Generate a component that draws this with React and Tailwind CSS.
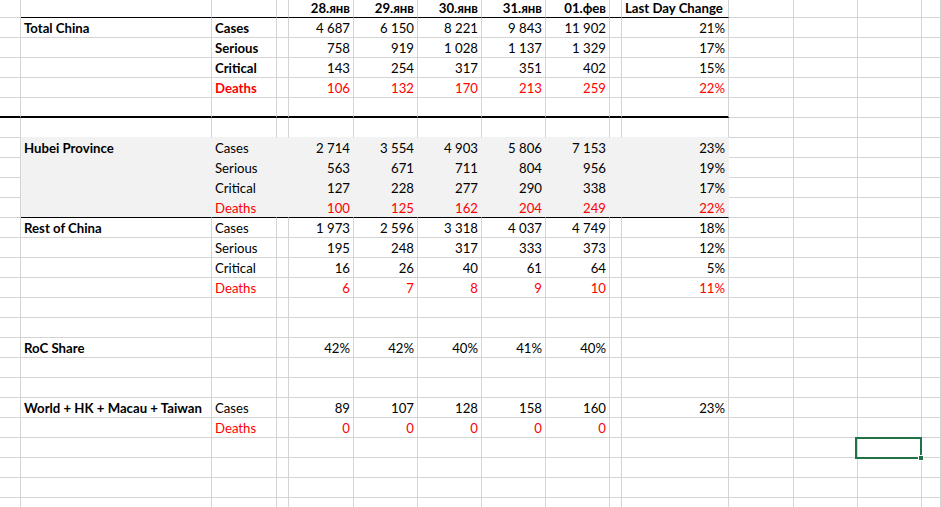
import React from 'react';

const GRID = 'grid grid-cols-[21px_191px_65px_12px_65px_64px_64px_64px_64px_12px_107px_65px_64px_64px_1fr]';

const DATES = ['28.янв', '29.янв', '30.янв', '31.янв', '01.фев'];

// one entry per sheet row below the header
const rows = [
  { name: 'Total China', label: 'Cases', vals: ['4 687', '6 150', '8 221', '9 843', '11 902'], change: '21%', boldLabel: true },
  { label: 'Serious', vals: ['758', '919', '1 028', '1 137', '1 329'], change: '17%', boldLabel: true },
  { label: 'Critical', vals: ['143', '254', '317', '351', '402'], change: '15%', boldLabel: true },
  { label: 'Deaths', vals: ['106', '132', '170', '213', '259'], change: '22%', boldLabel: true, red: true },
  { thick: true },
  { fillBelow: true },
  { name: 'Hubei Province', label: 'Cases', vals: ['2 714', '3 554', '4 903', '5 806', '7 153'], change: '23%', fill: true },
  { label: 'Serious', vals: ['563', '671', '711', '804', '956'], change: '19%', fill: true },
  { label: 'Critical', vals: ['127', '228', '277', '290', '338'], change: '17%', fill: true },
  { label: 'Deaths', vals: ['100', '125', '162', '204', '249'], change: '22%', fill: true, red: true, line: true },
  { name: 'Rest of China', label: 'Cases', vals: ['1 973', '2 596', '3 318', '4 037', '4 749'], change: '18%' },
  { label: 'Serious', vals: ['195', '248', '317', '333', '373'], change: '12%' },
  { label: 'Critical', vals: ['16', '26', '40', '61', '64'], change: '5%' },
  { label: 'Deaths', vals: ['6', '7', '8', '9', '10'], change: '11%', red: true },
  {},
  {},
  { name: 'RoC Share', vals: ['42%', '42%', '40%', '41%', '40%'] },
  {},
  {},
  { name: 'World + HK + Macau + Taiwan', label: 'Cases', vals: ['89', '107', '128', '158', '160'], change: '23%' },
  { label: 'Deaths', vals: ['0', '0', '0', '0', '0'], red: true },
  { selected: true },
  {},
  {},
  {},
];

function cellText(row, c) {
  if (c === 1) return row.name;
  if (c === 2) return row.label;
  if (c >= 4 && c <= 8) return row.vals?.[c - 4];
  if (c === 10) return row.change;
  return null;
}

function SheetRow({ row }) {
  return Array.from({ length: 15 }, (_, c) => {
    const inTable = c >= 1 && c <= 10;
    const filled = row.fill && inTable;
    let right = 'border-r-[#d4d4d4]';
    let bottom = 'border-b border-b-[#d4d4d4]';
    if (filled) right = 'border-r-[#f2f2f2]';
    if (filled) bottom = 'border-b border-b-[#f2f2f2]';
    if (row.fillBelow && inTable) bottom = 'border-b border-b-[#f2f2f2]';
    if (row.line && inTable) bottom = 'border-b border-b-black';
    if (row.thick && c <= 10) bottom = 'border-b-2 border-b-black';

    const text = cellText(row, c);
    const align = c >= 4 ? 'justify-end' : 'justify-start';
    const weight = c === 1 || (c === 2 && row.boldLabel) ? 'font-bold' : 'font-normal';
    const color = row.red && c !== 1 ? 'text-[#ff0000]' : 'text-black';

    return (
      <div
        key={c}
        className={`relative h-5 flex items-center pt-[2px] px-[3px] whitespace-nowrap border-r ${right} ${bottom} ${align} ${weight} ${color} ${filled ? 'bg-[#f2f2f2]' : 'bg-white'}`}
      >
        {text}
        {row.selected && c === 13 && (
          <div className="absolute -left-[3px] -top-[1px] w-[67px] h-[22px] border-2 border-[#217346] z-10">
            <div className="absolute -right-[4px] -bottom-[4px] w-[6px] h-[6px] bg-[#217346] border border-white" />
          </div>
        )}
      </div>
    );
  });
}

export default function App() {
  return (
    <div className="w-[941px] h-[507px] overflow-hidden bg-white font-['Lato',sans-serif] text-[13.2px] leading-none">
      <div className={GRID}>
        {Array.from({ length: 15 }, (_, c) => {
          const inTable = c >= 1 && c <= 10;
          let text = null;
          if (c >= 4 && c <= 8) text = DATES[c - 4];
          if (c === 10) text = 'Last Day Change';
          return (
            <div
              key={c}
              className={`h-[18px] flex items-center pt-[1px] px-[3px] whitespace-nowrap font-bold border-r border-r-[#d4d4d4] border-b ${inTable ? 'border-b-black' : 'border-b-[#d4d4d4]'} ${c >= 4 && c <= 8 ? 'justify-end' : 'justify-start'}`}
            >
              {text}
            </div>
          );
        })}
        {rows.map((row, i) => (
          <SheetRow key={i} row={row} />
        ))}
      </div>
    </div>
  );
}
